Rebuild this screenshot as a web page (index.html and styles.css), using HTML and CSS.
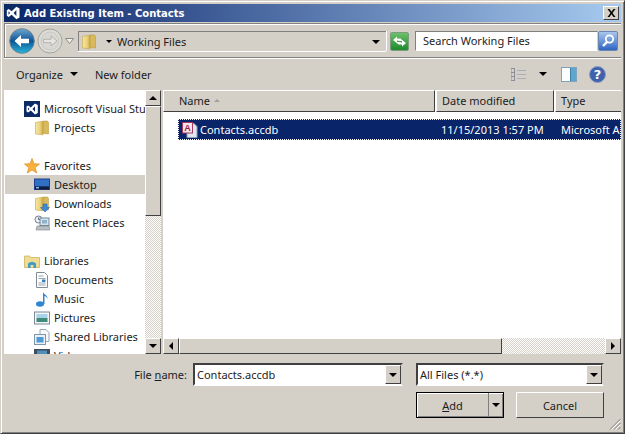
FILE: index.html
```html
<!DOCTYPE html>
<html lang="en">
<head>
  <meta charset="UTF-8">
  <title>Add Existing Item - Contacts</title>
  <link rel="stylesheet" href="styles.css">
</head>
<body>
  <svg class="defs" width="0" height="0">
    <defs>
      <linearGradient id="fold" x1="0" y1="0" x2="1" y2="0">
        <stop offset="0" stop-color="#f6e6a0"/><stop offset="0.6" stop-color="#ecd27a"/><stop offset="1" stop-color="#c9a648"/>
      </linearGradient>
      <symbol id="folder" viewBox="0 0 16 16">
        <path d="M9 1h4.500l1 1.500V14l-5.500-.5z" fill="#d8b95c" stroke="#b3923f" stroke-width=".5"/>
        <path d="M1.500 2.500 9 1.200V14.800L1.500 14z" fill="url(#fold)" stroke="#c4a650" stroke-width=".6"/>
      </symbol>
      <symbol id="vs" viewBox="0 0 16 16">
        <rect width="16" height="16" fill="#0c2a63"/>
        <path d="M11 2.500 13.800 4v8L11 13.500 6.800 9.500 4.200 11.500 2.500 10.500V5.500L4.200 4.500 6.800 6.500zM11 5.300 8.500 8 11 10.700zM4 6.500V9.500L5.400 8z" fill="#fff" fill-rule="evenodd"/>
      </symbol>
    </defs>
  </svg>

  <div class="window">
    <div class="titlebar">
      <svg class="title-icon"><use href="#vs"/></svg>
      <span class="title-text">Add Existing Item - Contacts</span>
      <button class="close-btn">
        <svg width="9" height="8" viewBox="0 0 9 8"><path d="M.5 0h2L4.500 2.700 6.500 0h2L5.500 4l3 4h-2L4.500 5.300 2.500 8h-2l3-4z" fill="#000"/></svg>
      </button>
    </div>

    <div class="addressbar">
      <div class="nav-buttons">
        <svg class="nav-circle" width="26" height="26" viewBox="0 0 26 26">
          <defs>
            <linearGradient id="backg" x1="0" y1="0" x2="0" y2="1"><stop offset="0" stop-color="#6fa6cf"/><stop offset=".5" stop-color="#0b5596"/><stop offset="1" stop-color="#27b6dc"/></linearGradient>
          </defs>
          <circle cx="13" cy="13" r="12.300" fill="url(#backg)" stroke="#6f8091"/>
          <path d="M5.500 13 12 7v3.800h8v4.400h-8V19z" fill="#fff"/>
        </svg>
        <svg class="nav-circle fwd" width="26" height="26" viewBox="0 0 26 26">
          <circle cx="13" cy="13" r="12" fill="#dedcd6" stroke="#a3a3a0"/>
          <circle cx="13" cy="13" r="9" fill="#d9d7d1" stroke="#c9c8c3"/>
          <path d="M20 13 14 8v3.300H6.500v3.400H14V18z" fill="#e6e5e1" stroke="#a8a8a5" stroke-width=".8"/>
        </svg>
        <svg class="nav-drop" width="9" height="6" viewBox="0 0 9 6"><path d="M.5.500h8L4.500 5.500z" fill="#f0efeb" stroke="#8b8b88"/></svg>
      </div>
      <div class="address-input">
        <svg class="icon addr-folder"><use href="#folder"/></svg>
        <span class="tri small"></span>
        <span class="addr-text">Working Files</span>
        <span class="tri addr-drop"></span>
      </div>
      <div class="refresh">
        <svg width="15" height="13" viewBox="0 0 15 13"><path d="M1 5 5 1.500V3.500H8.500L11 6H8L5 5.500V8z" fill="#fff"/><path d="M14 8 10 11.500V9.500H6.500L4 7H7L10 7.500V5z" fill="#fff"/></svg>
      </div>
      <div class="search-input">Search Working Files</div>
      <div class="search-btn">
        <svg width="16" height="16" viewBox="0 0 16 16"><circle cx="9.500" cy="6" r="3.700" fill="none" stroke="#fff" stroke-width="1.800"/><path d="M7 9 3 13" stroke="#fff" stroke-width="2.400"/></svg>
      </div>
    </div>

    <div class="toolbar">
      <span class="tool-item">Organize<span class="tri organize-drop"></span></span>
      <span class="tool-item">New folder</span>
      <div class="tool-right">
        <svg class="views" width="15" height="13" viewBox="0 0 15 13">
          <path d="M0 .500h4M0 4.500h4M0 8.500h4M0 12.500h4M0 .500v12M3.500 .500v12" stroke="#8a8f99" fill="none"/>
          <path d="M6 2.500h9M6 6.500h9M6 10.500h9" stroke="#a9aeb8" fill="none"/>
        </svg>
        <span class="tri views-drop"></span>
        <svg class="preview" width="16" height="15" viewBox="0 0 16 15">
          <rect x=".5" y=".5" width="15" height="14" fill="#fbfdff" stroke="#7fa3bd"/>
          <rect x="9" y="1" width="6" height="13" fill="#5ea8d0"/>
          <path d="M9.500 1v13" stroke="#3f7ea5"/>
        </svg>
        <svg class="help" width="17" height="17" viewBox="0 0 17 17">
          <circle cx="8.500" cy="8.500" r="8" fill="#3f62ad" stroke="#8d9cc4"/>
          <text x="8.500" y="13" text-anchor="middle" class="help-mark">?</text>
        </svg>
      </div>
    </div>

    <div class="panes">
      <div class="nav-pane">
        <div class="nav-row top"><svg class="icon"><use href="#vs"/></svg><span>Microsoft Visual Studio</span></div>
        <div class="nav-row sub"><svg class="icon"><use href="#folder"/></svg><span>Projects</span></div>
        <div class="nav-gap"></div>
        <div class="nav-row top">
          <svg class="icon" viewBox="0 0 16 16"><path d="M8 .500 10 5.700l5.500.3-4.300 3.500 1.500 5.500L8 12l-4.700 3 1.500-5.500L.5 6 6 5.700z" fill="#f8b13a" stroke="#e08a2c" stroke-width=".7"/></svg>
          <span>Favorites</span>
        </div>
        <div class="nav-row sub selected">
          <svg class="icon" viewBox="0 0 16 16"><rect x="0" y="1.500" width="16" height="11.500" fill="#1e3f8f"/><rect x="1" y="2.500" width="14" height="7" fill="#2f6fc4"/><rect x="1" y="9.500" width="14" height="3" fill="#101c3c"/><rect x="2" y="10" width="3" height="1.500" fill="#8fb8e0"/></svg>
          <span>Desktop</span>
        </div>
        <div class="nav-row sub">
          <svg class="icon" viewBox="0 0 16 16"><use href="#folder" width="16" height="16"/><path d="M9 8h4v3.500h2.500L11 16l-4.500-4.500H9z" fill="#3d8bd6" stroke="#1f5ea5" stroke-width=".5"/></svg>
          <span>Downloads</span>
        </div>
        <div class="nav-row sub">
          <svg class="icon" viewBox="0 0 16 16"><circle cx="4.500" cy="4.500" r="3.500" fill="#eef2f5" stroke="#6d7f8c"/><path d="M4.500 2.500v2h1.500" stroke="#445" fill="none" stroke-width=".8"/><rect x="6" y="3" width="9" height="7.500" fill="#d5e2ec" stroke="#738a9a"/><rect x="8" y="5" width="5" height="3.500" fill="#8fb3cc"/><path d="M3 11h12l1 4H2z" fill="#b8bec4" stroke="#7d858c" stroke-width=".6"/></svg>
          <span>Recent Places</span>
        </div>
        <div class="nav-gap"></div>
        <div class="nav-row top">
          <svg class="icon" viewBox="0 0 16 16"><path d="M.5 3h5l1 1.500h9v10H.5z" fill="#f0dc94" stroke="#c9ab52" stroke-width=".7"/><path d="M4 15v-4.500q4-3.500 8 0V15h-2.500v-3h-3v3z" fill="#3f9bc4"/></svg>
          <span>Libraries</span>
        </div>
        <div class="nav-row sub">
          <svg class="icon" viewBox="0 0 16 16"><path d="M2.500.5h8l3 3v12h-11z" fill="#fdfdfd" stroke="#7f8c98"/><path d="M4.500 4h5M4.500 6.500h7M4.500 11h7M4.500 13h7" stroke="#9aa6b2"/><rect x="8" y="7.500" width="3.500" height="2.500" fill="#3a7fc2"/></svg>
          <span>Documents</span>
        </div>
        <div class="nav-row sub">
          <svg class="icon" viewBox="0 0 16 16"><ellipse cx="6" cy="13" rx="4" ry="2.800" fill="#2f86d0"/><path d="M9 13V1c1 3 5 3 4.500 7-.5-2-2-3-3-3V13z" fill="#2f86d0"/></svg>
          <span>Music</span>
        </div>
        <div class="nav-row sub">
          <svg class="icon" viewBox="0 0 16 16"><rect x=".5" y="2" width="15" height="12" fill="#f3f5f7" stroke="#7d8a96"/><rect x="2.500" y="4" width="11" height="4" fill="#a8d2e8"/><rect x="2.500" y="8" width="11" height="4" fill="#3f8a78"/></svg>
          <span>Pictures</span>
        </div>
        <div class="nav-row sub">
          <svg class="icon" viewBox="0 0 16 16"><path d="M6 .5h6l3 3v9H6z" fill="#f6f8fa" stroke="#97a6b3"/><rect x=".5" y="5.500" width="11" height="10" fill="#e9f0f6" stroke="#7d97ad"/><rect x="2.500" y="8" width="7" height="5.500" fill="#4f9ad2"/></svg>
          <span>Shared Libraries</span>
        </div>
        <div class="nav-row sub">
          <svg class="icon" viewBox="0 0 16 16"><rect y="1" width="16" height="13" fill="#3f4c5c"/><rect x="3" y="2.500" width="10" height="10" fill="#4f8fb8"/><path d="M3 12.500 8 7l5 5.500z" fill="#b5713c"/></svg>
          <span>Videos</span>
        </div>
      </div>

      <div class="vscroll">
        <div class="sb-btn"><span class="tri up"></span></div>
        <div class="sb-thumb vthumb"></div>
        <div class="sb-track"></div>
        <div class="sb-btn"><span class="tri"></span></div>
      </div>

      <div class="file-pane">
        <div class="file-head">
          <div class="col col-name">Name<span class="sort"></span></div>
          <div class="col col-date">Date modified</div>
          <div class="col col-type">Type</div>
        </div>
        <div class="file-list">
          <div class="file-row">
            <div class="cell-name">
              <svg class="icon" viewBox="0 0 16 16">
                <path d="M5 1.500h7l3 3v11H5z" fill="#dfe8f2" stroke="#8d9db0"/>
                <rect x=".5" y=".5" width="10" height="10.500" fill="#f5e6ee" stroke="#a33a5c"/>
                <text x="5.500" y="9" text-anchor="middle" class="access-mark">A</text>
              </svg>
              <span>Contacts.accdb</span>
            </div>
            <div class="cell-date">11/15/2013 1:57 PM</div>
            <div class="cell-type">Microsoft Access Database</div>
          </div>
        </div>
        <div class="hscroll">
          <div class="sb-btn"><span class="tri left"></span></div>
          <div class="sb-thumb hthumb"></div>
          <div class="sb-track"></div>
          <div class="sb-btn"><span class="tri right"></span></div>
        </div>
      </div>
    </div>

    <div class="bottom">
      <div class="bottom-row">
        <label class="file-label">File <u>n</u>ame:</label>
        <div class="combo combo-name"><span class="combo-text">Contacts.accdb</span><div class="combo-btn"><span class="tri"></span></div></div>
        <div class="combo combo-type"><span class="combo-text">All Files (*.*)</span><div class="combo-btn"><span class="tri"></span></div></div>
      </div>
      <div class="bottom-row buttons">
        <div class="btn btn-add"><span class="add-label"><u>A</u>dd</span><span class="add-drop"><span class="tri"></span></span></div>
        <div class="btn btn-cancel">Cancel</div>
      </div>
      <svg class="grip" width="12" height="12" viewBox="0 0 12 12">
        <path d="M11.500 1 1 11.500M11.500 5 5 11.500M11.500 9 9 11.500" stroke="#808080"/>
        <path d="M11.500 2.500 2.500 11.500M11.500 6.500 6.500 11.500" stroke="#fff"/>
      </svg>
    </div>
  </div>
</body>
</html>
```

FILE: styles.css
```css
html, body {
  margin: 0;
  padding: 0;
  background: #d4d0c8;
  overflow: hidden;
}
body {
  font-family: "Noto Sans", Arial, sans-serif;
  font-size: 11px;
  color: #1c1c1c;
}
.defs {
  position: absolute;
}
.window {
  box-sizing: border-box;
  width: 625px;
  height: 434px;
  padding: 3px;
  background: #d4d0c8;
  border: 1px solid;
  border-color: #d4d0c8 #404040 #404040 #d4d0c8;
  box-shadow: inset 1px 1px 0 #fff, inset -1px -1px 0 #808080;
  display: flex;
  flex-direction: column;
}
.tri {
  display: inline-block;
  width: 0;
  height: 0;
  border-left: 4px solid transparent;
  border-right: 4px solid transparent;
  border-top: 4px solid #000;
}
.tri.small {
  border-left-width: 3px;
  border-right-width: 3px;
  border-top-width: 3px;
}
.tri.up {
  border-top: 0;
  border-bottom: 4px solid #000;
}
.tri.left {
  border-left: 0;
  border-top: 4px solid transparent;
  border-bottom: 4px solid transparent;
  border-right: 4px solid #000;
}
.tri.right {
  border-right: 0;
  border-top: 4px solid transparent;
  border-bottom: 4px solid transparent;
  border-left: 4px solid #000;
}
.icon {
  width: 16px;
  height: 16px;
  flex: none;
}

/* title bar */
.titlebar {
  height: 18px;
  margin-bottom: 1px;
  flex: none;
  display: flex;
  align-items: center;
  background: linear-gradient(to right, #0a246a, #a6caef);
  color: #fff;
}
.title-icon {
  width: 18px;
  height: 18px;
  margin-right: 2px;
}
.title-text {
  font-family: "DejaVu Sans", sans-serif;
  font-weight: bold;
  font-size: 10px;
  flex: 1;
}
.close-btn {
  box-sizing: border-box;
  width: 16px;
  height: 14px;
  margin-right: 2px;
  padding: 0;
  display: flex;
  align-items: center;
  justify-content: center;
  background: #d4d0c8;
  border: 1px solid;
  border-color: #fff #404040 #404040 #fff;
}

/* address bar */
.addressbar {
  box-sizing: border-box;
  height: 35px;
  flex: none;
  display: flex;
  align-items: center;
  padding: 1px 3px 0 4px;
  border-top: 1px solid #808080;
  border-left: 1px solid #808080;
  border-bottom: 1px solid #808080;
  box-shadow: inset 1px 1px 0 #fff, 0 1px 0 #fff;
}
.nav-buttons {
  width: 69px;
  display: flex;
  align-items: center;
  flex: none;
}
.nav-circle.fwd {
  margin-left: 2px;
}
.nav-drop {
  margin-left: 2px;
}
.address-input {
  box-sizing: border-box;
  width: 308px;
  height: 20px;
  flex: none;
  display: flex;
  align-items: center;
  border-top: 1px solid #808080;
  border-left: 1px solid #808080;
  background: #d4d0c8;
  box-shadow: 0 1px 0 #fff, 1px 0 0 #fff;
  padding-left: 2px;
}
.addr-folder {
  margin-right: 9px;
}
.addr-text {
  margin-left: 5px;
  flex: 1;
}
.addr-drop {
  margin-right: 6px;
}
.refresh {
  width: 19px;
  height: 19px;
  margin-left: 4px;
  flex: none;
  display: flex;
  align-items: center;
  justify-content: center;
  background: linear-gradient(#6cc06a, #1f8a2c);
  border: 1px solid #7d9c82;
  border-radius: 2px;
  box-sizing: border-box;
}
.search-input {
  box-sizing: border-box;
  width: 183px;
  height: 20px;
  margin-left: 6px;
  flex: none;
  background: #fff;
  border: 1px solid;
  border-color: #808080 #d4d0c8 #fff #808080;
  padding-left: 7px;
  line-height: 17px;
}
.search-btn {
  box-sizing: border-box;
  width: 20px;
  height: 20px;
  flex: none;
  display: flex;
  align-items: center;
  justify-content: center;
  background: linear-gradient(#a9c6ec, #2f66c4);
  border: 1px solid #6b86b0;
  border-radius: 2px;
}

/* toolbar */
.toolbar {
  height: 32px;
  flex: none;
  display: flex;
  align-items: center;
  padding: 0 15px 0 12px;
  gap: 17px;
}
.tool-item {
  display: flex;
  align-items: center;
}
.organize-drop {
  margin-left: 7px;
}
.tool-right {
  margin-left: auto;
  display: flex;
  align-items: center;
}
.views-drop {
  margin-left: 13px;
}
.preview {
  margin-left: 14px;
}
.help {
  margin-left: 12px;
}
.help-mark {
  fill: #fff;
  font: bold 13px "DejaVu Sans", sans-serif;
}

/* panes */
.panes {
  height: 264px;
  flex: none;
  display: flex;
  overflow: hidden;
}
.nav-pane {
  width: 141px;
  flex: none;
  background: #fff;
  padding-top: 9px;
  overflow: hidden;
}
.nav-row {
  height: 19px;
  display: flex;
  align-items: center;
  white-space: nowrap;
  overflow: hidden;
}
.nav-row.top {
  padding-left: 20px;
}
.nav-row.sub {
  padding-left: 30px;
}
.nav-row .icon {
  margin-right: 4px;
}
.nav-row.selected {
  background: #d4d0c8;
  margin-left: 1px;
  padding-left: 29px;
}
.nav-gap {
  height: 19px;
}
.vscroll {
  width: 16px;
  flex: none;
  display: flex;
  flex-direction: column;
}
.sb-btn {
  box-sizing: border-box;
  width: 16px;
  height: 16px;
  flex: none;
  display: flex;
  align-items: center;
  justify-content: center;
  background: #d4d0c8;
  border: 1px solid;
  border-color: #fff #404040 #404040 #fff;
}
.sb-thumb {
  box-sizing: border-box;
  flex: none;
  background: #d4d0c8;
  border: 1px solid;
  border-color: #fff #404040 #404040 #fff;
}
.vthumb {
  height: 110px;
}
.hthumb {
  width: 323px;
}
.sb-track {
  flex: 1;
  background: repeating-conic-gradient(#d4d0c8 0 25%, #fff 0 50%) 0 0 / 2px 2px;
}
.file-pane {
  flex: 1;
  min-width: 0;
  margin-left: 2px;
  display: flex;
  flex-direction: column;
  background: #fff;
}
.file-head {
  height: 22px;
  flex: none;
  display: flex;
}
.col {
  box-sizing: border-box;
  background: #d4d0c8;
  border: 1px solid;
  border-color: #fff #404040 #404040 #fff;
  padding-left: 5px;
  line-height: 20px;
  margin-right: 1px;
}
.col-name {
  width: 272px;
  padding-left: 15px;
}
.col-date {
  width: 118px;
}
.col-type {
  flex: 1;
  margin-right: 0;
  border-right: 0;
}
.sort {
  display: inline-block;
  margin-left: 4px;
  vertical-align: 3px;
  border-left: 3px solid transparent;
  border-right: 3px solid transparent;
  border-bottom: 3px solid #a0a0a0;
}
.file-list {
  flex: 1;
  padding: 7px 0 0 15px;
  min-height: 0;
  overflow: hidden;
}
.file-row {
  box-sizing: border-box;
  height: 21px;
  display: flex;
  align-items: center;
  background: #0a246a;
  color: #fff;
  outline: 1px dotted #fff;
  outline-offset: -1px;
  border: 1px dotted #000;
  white-space: nowrap;
  overflow: hidden;
}
.cell-name {
  width: 259px;
  flex: none;
  display: flex;
  align-items: center;
  padding-left: 3px;
  gap: 2px;
}
.cell-date {
  width: 120px;
  flex: none;
}
.access-mark {
  fill: #a01c44;
  font: bold 9px "Liberation Sans", sans-serif;
}
.hscroll {
  height: 16px;
  flex: none;
  display: flex;
  background: #d4d0c8;
}

/* bottom */
.bottom {
  flex: 1;
  position: relative;
  padding: 9px 17px 0 0;
}
.bottom-row {
  display: flex;
  align-items: center;
  justify-content: flex-end;
}
.file-label {
  margin-right: 6px;
}
.combo {
  box-sizing: border-box;
  height: 23px;
  display: flex;
  align-items: center;
  background: #fff;
  border: 2px solid;
  border-color: #404040 #d4d0c8 #fff #404040;
}
.combo-text {
  flex: 1;
  padding-left: 2px;
}
.combo-name {
  width: 210px;
}
.combo-type {
  width: 188px;
  margin-left: 13px;
}
.combo-btn {
  box-sizing: border-box;
  width: 16px;
  height: 19px;
  flex: none;
  display: flex;
  align-items: center;
  justify-content: center;
  background: #d4d0c8;
  border: 1px solid;
  border-color: #fff #404040 #404040 #fff;
}
.buttons {
  margin-top: 6px;
  gap: 12px;
}
.btn {
  box-sizing: border-box;
  width: 88px;
  height: 26px;
  display: flex;
  align-items: center;
  justify-content: center;
  background: #d4d0c8;
  border: 1px solid;
  border-color: #fff #404040 #404040 #fff;
}
.btn-add {
  border: 1px solid #000;
  box-shadow: inset 1px 1px 0 #fff, inset -1px -1px 0 #808080;
}
.add-label {
  flex: 1;
  text-align: center;
}
.add-drop {
  width: 14px;
  height: 24px;
  display: flex;
  align-items: center;
  justify-content: center;
  border-left: 1px solid #808080;
}
.grip {
  position: absolute;
  right: 0;
  bottom: 0;
}
```
